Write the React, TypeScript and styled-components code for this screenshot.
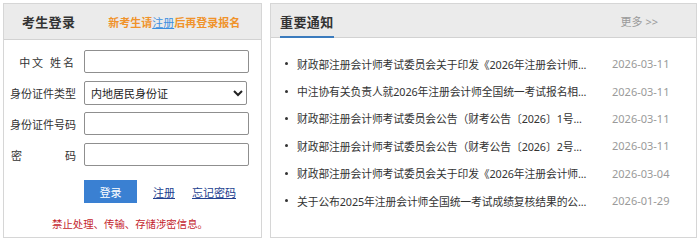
import React from 'react';
import styled, { createGlobalStyle } from 'styled-components';

const GlobalStyle = createGlobalStyle`
  html, body {
    margin: 0;
    padding: 0;
    background: #fff;
  }
  body {
    font-family: "Noto Sans", "Noto Sans CJK SC", sans-serif;
    color: #333;
  }
`;

const colors = {
    border: '#d6d6d6',
    headerBg: '#ebebeb',
    headerLine: '#d2d2d2',
    orange: '#f0932b',
    blue: '#3a80d2',
    link: '#22408f',
    red: '#c4262e',
    gray: '#9a9a9a',
};

const Page = styled.div`
  display: flex;
  gap: 8px;
  padding: 3px 3px 0 3px;
  width: 700px;
  height: 241px;
  box-sizing: border-box;
`;

const Panel = styled.section<{ width: number }>`
  width: ${({ width }) => width}px;
  height: 235px;
  box-sizing: border-box;
  border: 1px solid ${colors.border};
  display: flex;
  flex-direction: column;
`;

const PanelHeader = styled.div<{ height: number }>`
  display: flex;
  align-items: center;
  height: ${({ height }) => height}px;
  flex-shrink: 0;
  background: ${colors.headerBg};
  border-bottom: 1px solid ${colors.headerLine};
  box-sizing: border-box;
`;

const LoginTitle = styled.h2`
  margin: 0 0 0 18px;
  font-size: 13px;
  font-weight: 700;
  color: #333;
  letter-spacing: 0.3px;
`;

const RegisterTip = styled.div`
  margin-left: 33px;
  font-size: 11px;
  font-weight: 700;
  color: ${colors.orange};
`;

const TipLink = styled.a`
  color: #3d8fe0;
  text-decoration: underline;
  font-weight: 400;
`;

const Form = styled.form`
  display: flex;
  flex-direction: column;
  gap: 8px;
  padding: 10px 0 0 7px;
`;

const Row = styled.div`
  display: flex;
  align-items: center;
  gap: 8px;
  height: 23px;
`;

const Label = styled.label<{ spread?: boolean; spaced?: boolean }>`
  width: 65px;
  font-size: 11px;
  color: #333;
  white-space: pre;
  display: flex;
  letter-spacing: ${({ spaced }) => (spaced ? '2px' : '0')};
  justify-content: ${({ spread }) => (spread ? 'space-between' : 'flex-end')};
`;

const TextInput = styled.input`
  width: 165px;
  height: 23px;
  box-sizing: border-box;
  border: 1px solid #8f8f8f;
  border-radius: 2px;
  padding: 0 4px;
  font-size: 11px;
  font-family: "Noto Sans CJK SC", sans-serif;
`;

const Select = styled.select`
  width: 163px;
  height: 24px;
  box-sizing: border-box;
  border: 1px solid #8f8f8f;
  border-radius: 2px;
  padding: 0 2px;
  font-size: 11px;
  color: #222;
  background: #fff;
  font-family: "Noto Sans CJK SC", sans-serif;
`;

const Actions = styled.div`
  display: flex;
  align-items: center;
  padding-left: 80px;
  margin-top: 14px;
  height: 23px;
`;

const LoginButton = styled.button`
  width: 53px;
  height: 23px;
  border: none;
  background: ${colors.blue};
  color: #fff;
  font-size: 11px;
  font-family: "Noto Sans CJK SC", sans-serif;
  padding: 0;
  margin-right: 16px;
`;

const ActionLink = styled.a`
  font-size: 11px;
  color: ${colors.link};
  text-decoration: underline;
  margin-right: 17px;
`;

const Warning = styled.p`
  margin: 13px 0 0 0;
  padding-right: 5px;
  text-align: center;
  font-size: 10.4px;
  color: ${colors.red};
`;

const NoticeTitle = styled.h2`
  margin: 0 0 -1px 9px;
  height: 100%;
  display: flex;
  align-items: center;
  font-size: 13px;
  font-weight: 700;
  color: #333;
  letter-spacing: 0.4px;
  border-bottom: 2px solid #3b7bbd;
  box-sizing: border-box;
  padding-top: 2px;
`;

const More = styled.a`
  margin-left: auto;
  margin-right: 38px;
  font-size: 11px;
  color: ${colors.gray};
`;

const List = styled.ul`
  list-style: none;
  margin: 0;
  padding: 12px 0 0 0;
`;

const Item = styled.li`
  display: flex;
  align-items: center;
  height: 27.4px;
  padding-left: 14px;
`;

const Dot = styled.span`
  width: 3px;
  height: 3px;
  border-radius: 50%;
  background: #333;
  margin-right: 9px;
  flex-shrink: 0;
`;

const ItemTitle = styled.a`
  flex: 0 0 300px;
  font-size: 10.8px;
  color: #333;
  white-space: nowrap;
  letter-spacing: -0.1px;
`;

const ItemDate = styled.span`
  margin-left: 15px;
  font-size: 11px;
  color: ${colors.gray};
  font-family: "Noto Sans", sans-serif;
`;

const notices = [
    { title: '财政部注册会计师考试委员会关于印发《2026年注册会计师...', date: '2026-03-11' },
    { title: '中注协有关负责人就2026年注册会计师全国统一考试报名相...', date: '2026-03-11' },
    { title: '财政部注册会计师考试委员会公告（财考公告〔2026〕1号...', date: '2026-03-11' },
    { title: '财政部注册会计师考试委员会公告（财考公告〔2026〕2号...', date: '2026-03-11' },
    { title: '财政部注册会计师考试委员会关于印发《2026年注册会计师...', date: '2026-03-04' },
    { title: '关于公布2025年注册会计师全国统一考试成绩复核结果的公...', date: '2026-01-29' },
];

const LoginPanel = () => (
    <Panel width={259}>
        <PanelHeader height={36}>
            <LoginTitle>考生登录</LoginTitle>
            <RegisterTip>
                新考生请<TipLink>注册</TipLink>后再登录报名
            </RegisterTip>
        </PanelHeader>
        <Form onSubmit={(e) => e.preventDefault()}>
            <Row>
                <Label spaced>{'中文 姓名'}</Label>
                <TextInput type="text" />
            </Row>
            <Row>
                <Label>身份证件类型</Label>
                <Select defaultValue="1">
                    <option value="1">内地居民身份证</option>
                </Select>
            </Row>
            <Row>
                <Label>身份证件号码</Label>
                <TextInput type="text" />
            </Row>
            <Row>
                <Label spread>
                    <span>密</span>
                    <span>码</span>
                </Label>
                <TextInput type="password" />
            </Row>
        </Form>
        <Actions>
            <LoginButton type="button">登录</LoginButton>
            <ActionLink>注册</ActionLink>
            <ActionLink>忘记密码</ActionLink>
        </Actions>
        <Warning>禁止处理、传输、存储涉密信息。</Warning>
    </Panel>
);

const NoticePanel = () => (
    <Panel width={427}>
        <PanelHeader height={34}>
            <NoticeTitle>重要通知</NoticeTitle>
            <More>更多 &gt;&gt;</More>
        </PanelHeader>
        <List>
            {notices.map((n, i) => (
                <Item key={i}>
                    <Dot />
                    <ItemTitle>{n.title}</ItemTitle>
                    <ItemDate>{n.date}</ItemDate>
                </Item>
            ))}
        </List>
    </Panel>
);

export default function App() {
    return (
        <>
            <GlobalStyle />
            <Page>
                <LoginPanel />
                <NoticePanel />
            </Page>
        </>
    );
}
